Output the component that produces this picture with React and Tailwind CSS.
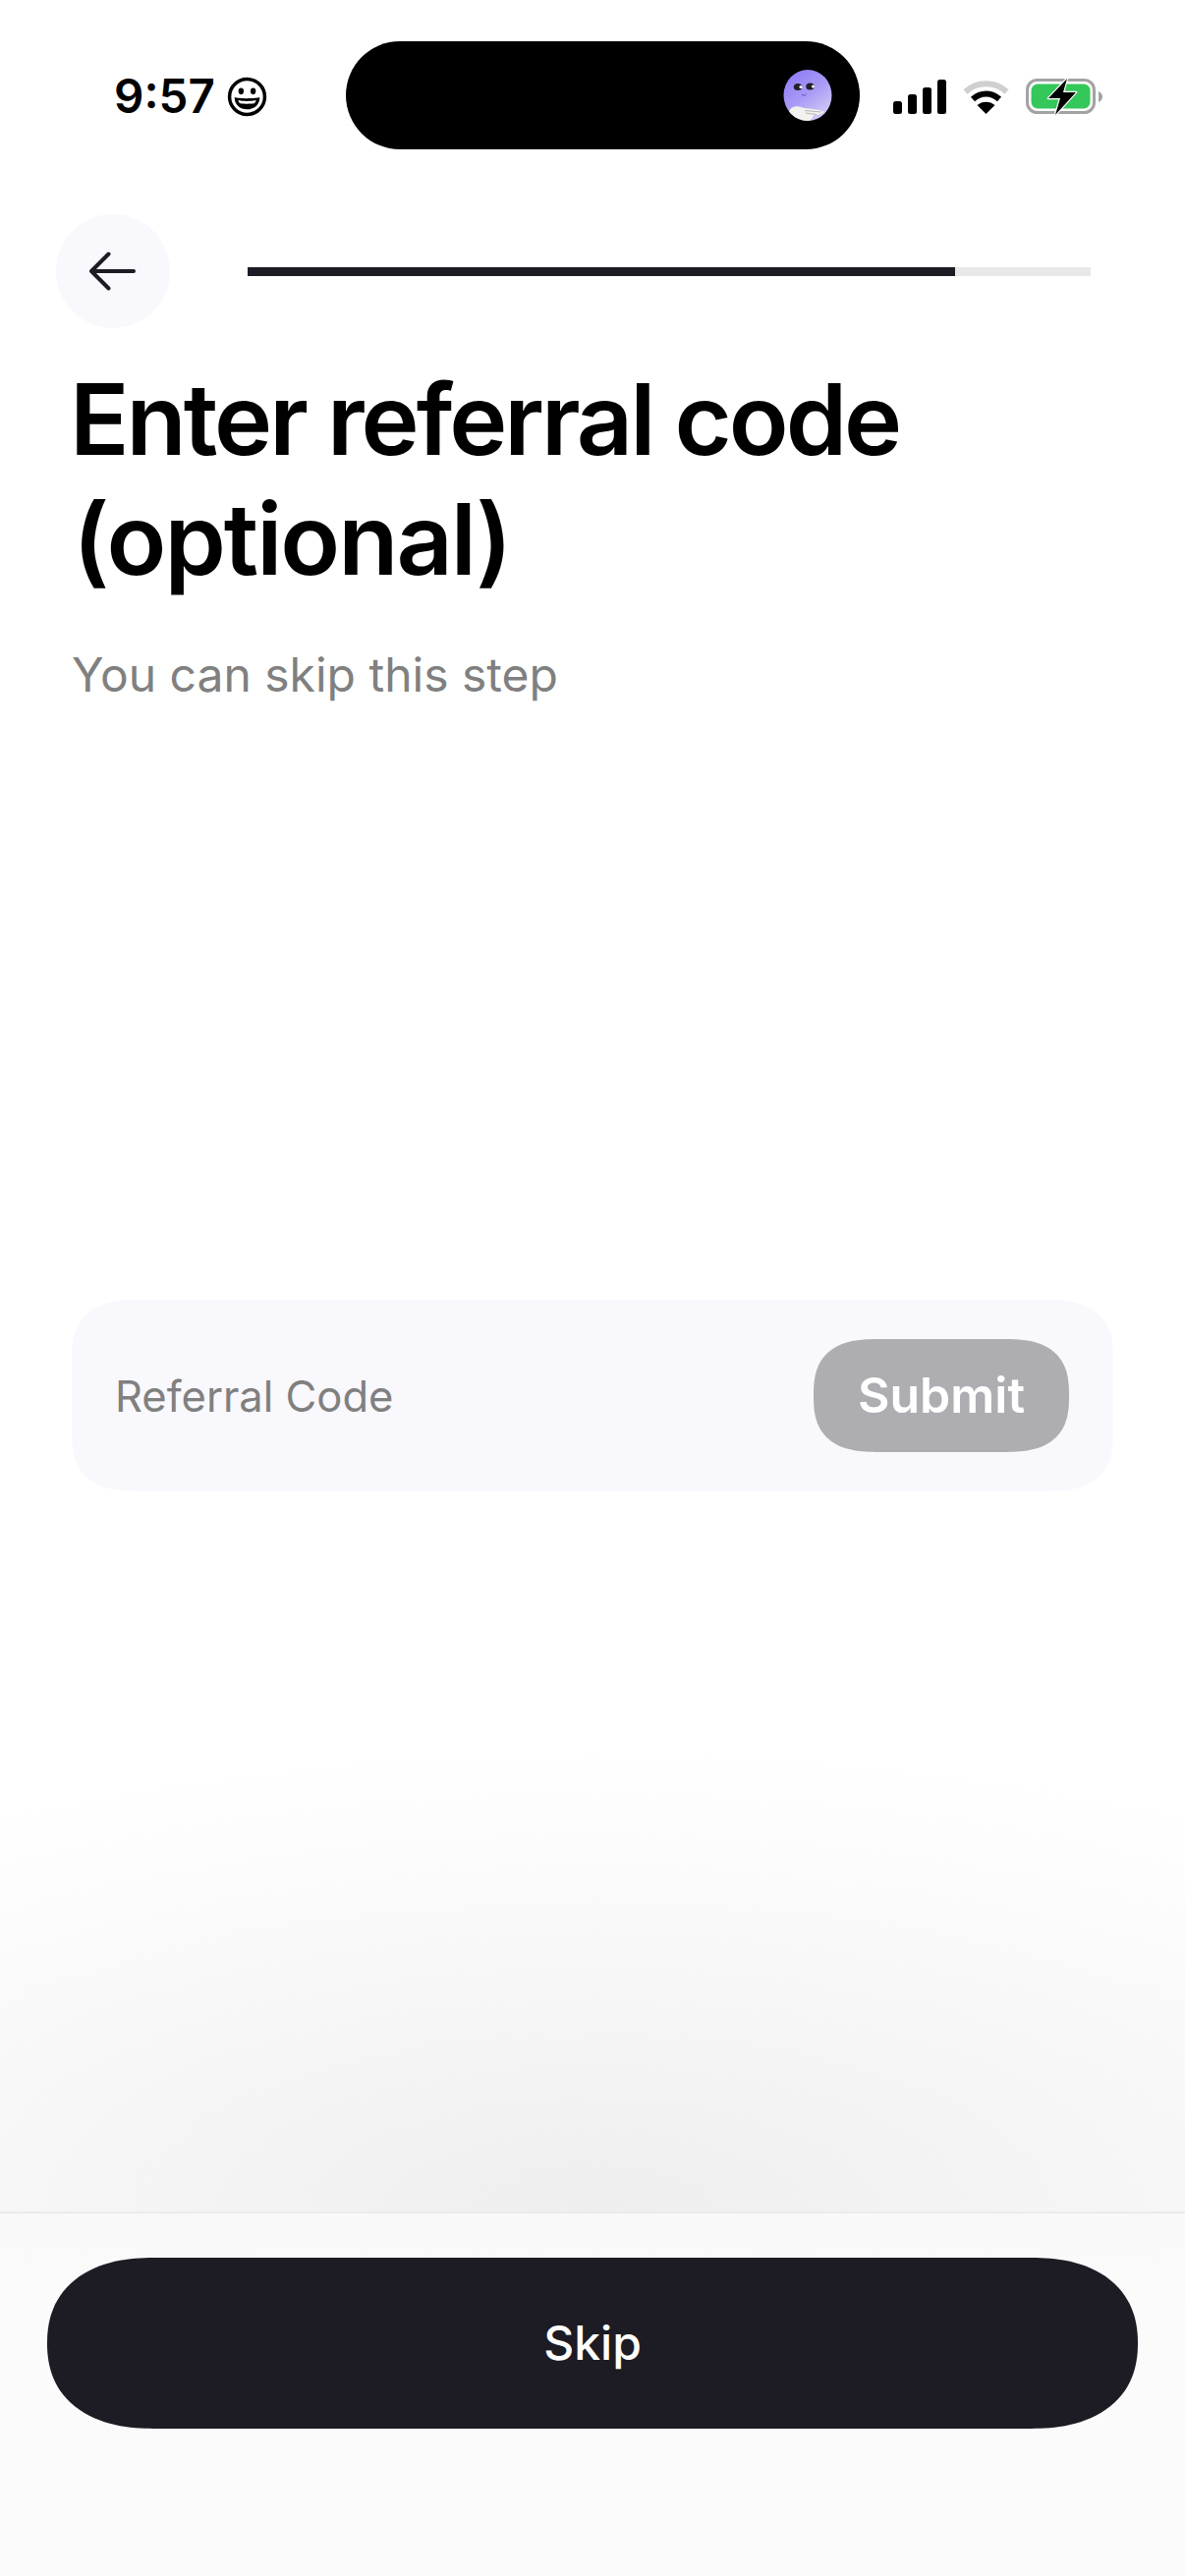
function Smiley() {
  return (
    <svg width="41" height="41" viewBox="0 0 40 40" fill="none">
      <circle cx="20" cy="20" r="17.5" stroke="#000" strokeWidth="3.4" />
      <ellipse cx="14" cy="14.5" rx="2.6" ry="3.2" fill="#000" />
      <ellipse cx="26" cy="14.5" rx="2.6" ry="3.2" fill="#000" />
      <path d="M7.5 20.5C12 22 28 22 32.5 20.5C32.5 28 27 32.5 20 32.5C13 32.5 7.5 28 7.5 20.5Z" fill="#000" />
      <path d="M11 23.5C15 24.6 25 24.6 29 23.5C28.5 25 27.8 26 27 26.6C23 27.2 17 27.2 13 26.6C12.2 26 11.5 25 11 23.5Z" fill="#fff" />
    </svg>
  );
}

function Avatar() {
  return (
    <svg width="50" height="52" viewBox="0 0 50 52">
      <defs>
        <linearGradient id="avatarGrad" x1="0.1" y1="0.1" x2="0.7" y2="1">
          <stop offset="0%" stopColor="#8f7ef6" />
          <stop offset="50%" stopColor="#a99af6" />
          <stop offset="100%" stopColor="#d3cbf6" />
        </linearGradient>
        <clipPath id="avatarClip">
          <ellipse cx="25" cy="26" rx="24.5" ry="26" />
        </clipPath>
      </defs>
      <ellipse cx="25" cy="26" rx="24.5" ry="26" fill="url(#avatarGrad)" />
      <ellipse cx="15" cy="17.5" rx="4.2" ry="3.6" fill="#241f28" />
      <ellipse cx="27.5" cy="17" rx="4.2" ry="3.6" fill="#241f28" />
      <circle cx="18" cy="17.5" r="1.6" fill="#f5f5f5" />
      <circle cx="30.5" cy="17" r="1.6" fill="#f5f5f5" />
      <path d="M19 25C20 26.5 22.5 26.5 23.5 25" stroke="#4d3fa3" strokeWidth="0.8" fill="none" />
      <g clipPath="url(#avatarClip)">
        <path d="M6 42C8 38 13 36 18 38C24 40 36 39.5 42 43C39 45.5 34 46 31 46.5C30 50 26 54 20 54C11 54 5 47 6 42Z" fill="#f4f2ee" />
        <path d="M22 41.5L39 43M23 44L34 45.5" stroke="#8d8a94" strokeWidth="0.6" />
      </g>
    </svg>
  );
}

function Signal() {
  return (
    <svg width="54" height="35" viewBox="0 0 54 35" fill="#000">
      <rect x="0" y="22" width="9" height="13" rx="2.5" />
      <rect x="15" y="15" width="9" height="20" rx="2.5" />
      <rect x="30" y="8" width="9" height="27" rx="2.5" />
      <rect x="45" y="0" width="9" height="35" rx="2.5" />
    </svg>
  );
}

function Wifi() {
  return (
    <svg width="47" height="35" viewBox="0 0 47 35" fill="none">
      <path d="M2.5 12.5C14 1.5 33 1.5 44.5 12.5" stroke="#cfcfcf" strokeWidth="6" />
      <path d="M10 20C18 12.5 29 12.5 37 20" stroke="#000" strokeWidth="6" />
      <path d="M23.5 35L14.5 26C19.5 21.5 27.5 21.5 32.5 26Z" fill="#000" />
    </svg>
  );
}

function Battery() {
  return (
    <svg width="78" height="38" viewBox="0 0 78 38" fill="none">
      <rect x="1.5" y="1.5" width="68" height="33" rx="10" stroke="#a3a3a3" strokeWidth="3" />
      <rect x="5.5" y="5.5" width="60" height="25" rx="6.5" fill="#34c759" />
      <path d="M74 13C76.5 14 78 16 78 18.5C78 21 76.5 23 74 24Z" fill="#a3a3a3" />
      <path d="M42 0L23 20H35L30 37L51 14H38Z" fill="#000" stroke="#fff" strokeWidth="2.5" paintOrder="stroke" strokeLinejoin="round" />
    </svg>
  );
}

export default function App() {
  return (
    <div className="relative flex h-[2622px] w-full flex-col overflow-hidden bg-white font-['Inter',sans-serif]">
      {/* Status bar */}
      <div className="flex h-[152px] items-end pb-[34px]">
        <div className="mb-[-3px] ml-[116px] flex w-[236px] items-center gap-[12px]">
          <span className="text-[47.5px] font-semibold leading-[46px] text-black">9:57</span>
          <Smiley />
        </div>
        <div className="mb-[-34px] flex h-[110px] w-[523px] items-center justify-end rounded-[55px] bg-black pr-[28px]">
          <Avatar />
        </div>
        <div className="ml-[34px] flex items-center">
          <Signal />
          <div className="ml-[17px]">
            <Wifi />
          </div>
          <div className="ml-[17px] mt-[2px]">
            <Battery />
          </div>
        </div>
      </div>

      {/* Back and progress */}
      <div className="mt-[66px] flex items-center pl-[57px] pr-[96px]">
        <button className="flex h-[116px] w-[116px] items-center justify-center rounded-full bg-[#f9f8fd]">
          <svg width="48" height="40" viewBox="0 0 48 40" fill="none" stroke="#1d1b24" strokeWidth="4" strokeLinecap="round" strokeLinejoin="round">
            <path d="M45 20H2M19.5 2.5L2 20L19.5 37.5" />
          </svg>
        </button>
        <div className="ml-[79px] flex h-[9px] flex-1 bg-[#e8e8e8]">
          <div className="h-full w-[720px] bg-[#1d1b24]" />
        </div>
      </div>

      {/* Heading */}
      <h1 className="ml-[74px] mt-[32px] text-[100px] font-semibold leading-[122px] tracking-[-2px] text-black">
        <span className="ml-[-3px] tracking-[-3px]">Enter referral code</span>
        <br />
        (optional)
      </h1>
      <p className="ml-[73px] mt-[45px] text-[48px] leading-[64px] text-[#808080]">You can skip this step</p>

      {/* Referral input */}
      <div className="mx-[73px] mt-[604px] flex h-[195px] items-center justify-between rounded-[72px/64px] bg-[#f9f8fd] pl-[44px] pr-[45px] [corner-shape:superellipse(1.5)]">
        <span className="mt-[3px] text-[43.5px] text-[#808080]">Referral Code</span>
        <button className="flex h-[115px] w-[260px] items-center justify-center rounded-[66px/57px] bg-[#aeadb1] text-[50px] font-semibold text-white [corner-shape:superellipse(1.4)]">
          Submit
        </button>
      </div>

      {/* Bottom fade */}
      <div className="mt-auto h-[470px] bg-[radial-gradient(ellipse_100%_100%_at_50%_100%,#eeeeee_0%,#f5f5f5_40%,#fcfcfc_80%,#ffffff_100%)]" />
      <div className="flex h-[371px] flex-col border-t-2 border-[#ebebeb] bg-[linear-gradient(#f9f9f9,#fbfbfb_30%)] px-[48px] pt-[45px]">
        <button className="flex h-[174px] w-full items-center justify-center rounded-[108px/87px] bg-[#1d1b24] text-[48px] font-medium text-white [corner-shape:superellipse(1.2)]">
          Skip
        </button>
      </div>
    </div>
  );
}
